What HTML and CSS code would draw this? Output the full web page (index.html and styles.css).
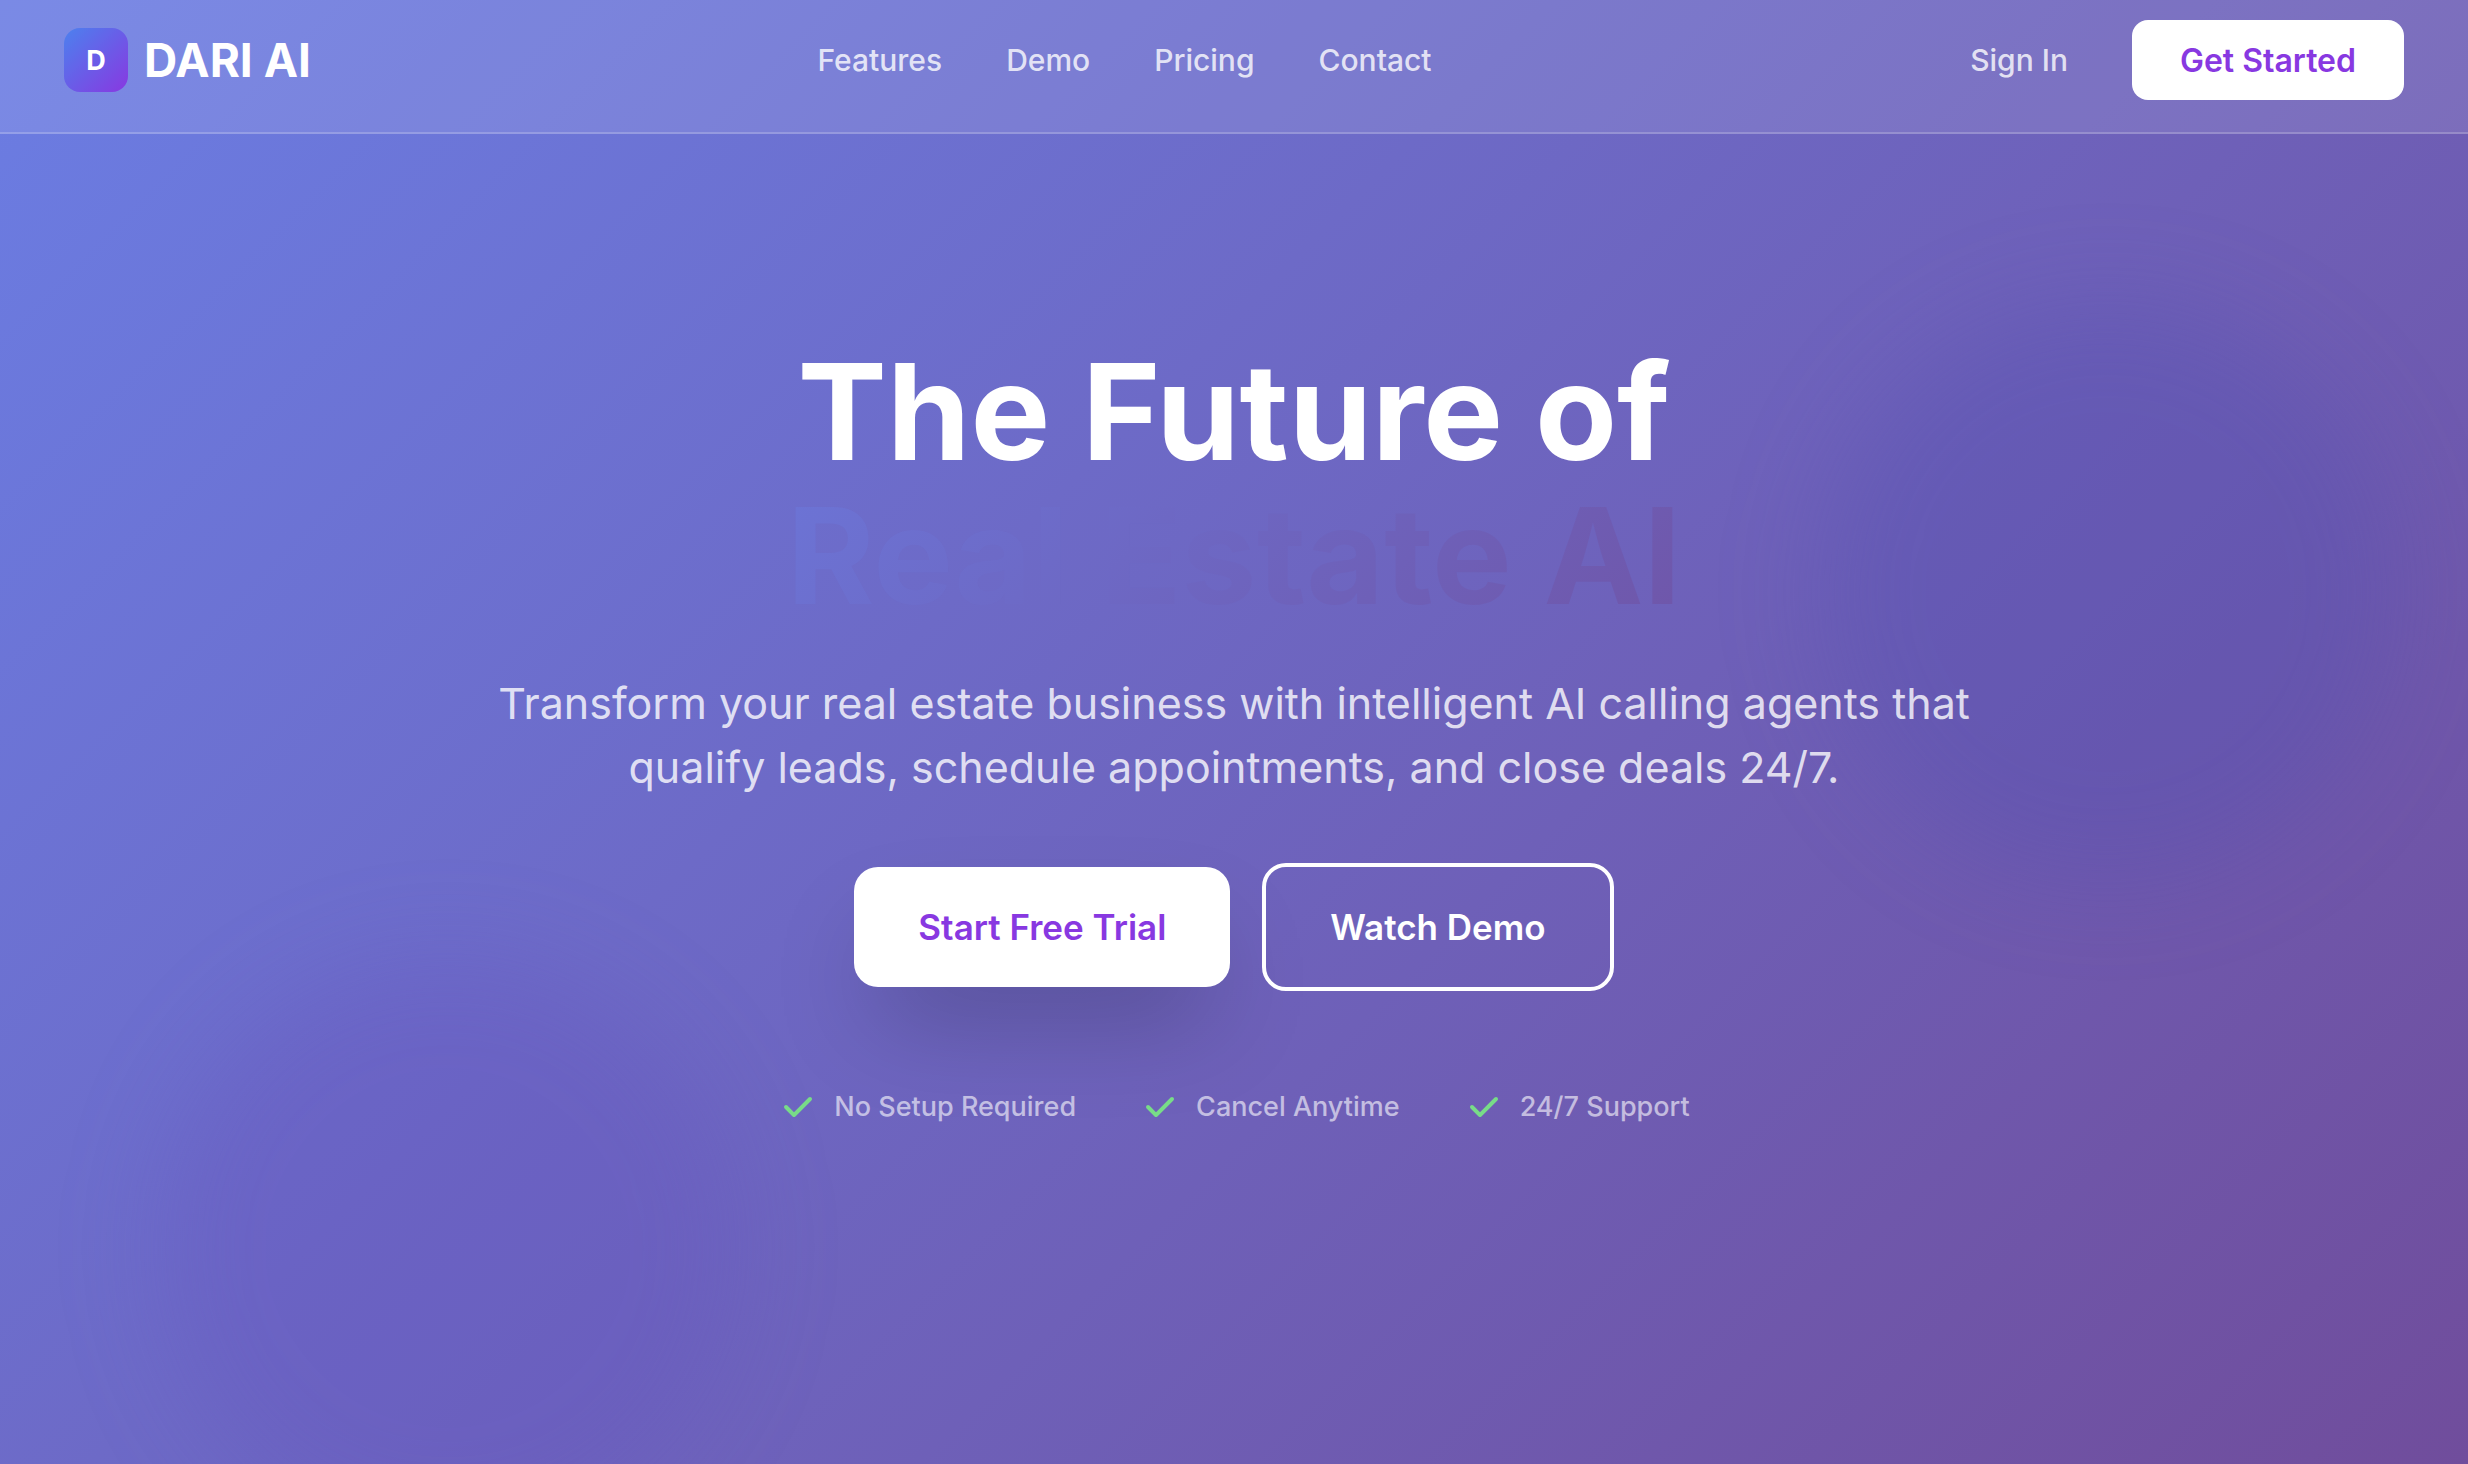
FILE: index.html
```html
<!DOCTYPE html>
<html lang="en">
<head>
<meta charset="utf-8">
<meta name="viewport" content="width=device-width, initial-scale=1">
<title>DARI AI</title>
<link rel="stylesheet" href="styles.css">
</head>
<body>
<div class="page">
  <div class="orb orb-right"></div>
  <div class="orb orb-left"></div>
  <header class="navbar">
    <a class="brand" href="#"><span class="brand-mark">D</span><span class="brand-name">DARI AI</span></a>
    <nav class="nav-links">
      <a href="#features">Features</a>
      <a href="#demo">Demo</a>
      <a href="#pricing">Pricing</a>
      <a href="#contact">Contact</a>
    </nav>
    <div class="nav-actions">
      <a class="sign-in" href="#signin">Sign In</a>
      <button class="btn-small" type="button">Get Started</button>
    </div>
  </header>
  <main class="hero">
    <h1 class="title">The Future of<span class="title-accent">Real Estate AI</span></h1>
    <p class="lead">Transform your real estate business with intelligent AI calling agents that qualify leads, schedule appointments, and close deals 24/7.</p>
    <div class="actions">
      <button class="btn btn-primary" type="button">Start Free Trial</button>
      <button class="btn btn-outline" type="button">Watch Demo</button>
    </div>
    <ul class="perks">
      <li><svg class="check" viewBox="0 0 20 20" aria-hidden="true"><path fill-rule="evenodd" d="M16.707 5.293a1 1 0 010 1.414l-8 8a1 1 0 01-1.414 0l-4-4a1 1 0 011.414-1.414L8 12.586l7.293-7.293a1 1 0 011.414 0z"/></svg>No Setup Required</li>
      <li><svg class="check" viewBox="0 0 20 20" aria-hidden="true"><path fill-rule="evenodd" d="M16.707 5.293a1 1 0 010 1.414l-8 8a1 1 0 01-1.414 0l-4-4a1 1 0 011.414-1.414L8 12.586l7.293-7.293a1 1 0 011.414 0z"/></svg>Cancel Anytime</li>
      <li><svg class="check" viewBox="0 0 20 20" aria-hidden="true"><path fill-rule="evenodd" d="M16.707 5.293a1 1 0 010 1.414l-8 8a1 1 0 01-1.414 0l-4-4a1 1 0 011.414-1.414L8 12.586l7.293-7.293a1 1 0 011.414 0z"/></svg>24/7 Support</li>
    </ul>
  </main>
</div>
</body>
</html>
```
FILE: styles.css
```css
* {
  box-sizing: border-box;
}

body {
  margin: 0;
  font-family: Inter, "Liberation Sans", sans-serif;
  color: #fff;
}

a {
  color: inherit;
  text-decoration: none;
}

button {
  border: 0;
  font-family: inherit;
  font-weight: 600;
  cursor: pointer;
}

.page {
  position: relative;
  display: flex;
  flex-direction: column;
  min-height: 100vh;
  overflow: hidden;
  background: linear-gradient(135deg, #6b7de3 0%, #704d9c 100%);
}

.orb {
  position: absolute;
  width: 576px;
  height: 576px;
  border-radius: 50%;
  filter: blur(48px);
}

.orb-right {
  top: 304px;
  right: 72px;
  background: rgba(79, 78, 178, 0.27);
}

.orb-left {
  bottom: -72px;
  left: 160px;
  background: rgba(99, 80, 190, 0.27);
}

.navbar {
  position: relative;
  display: flex;
  justify-content: space-between;
  align-items: center;
  padding: 20px 64px 32px;
  border-bottom: 2px solid rgba(255, 255, 255, 0.2);
  background: rgba(255, 255, 255, 0.1);
}

.brand {
  display: flex;
  align-items: center;
  gap: 16px;
}

.brand-mark {
  display: grid;
  place-items: center;
  width: 64px;
  height: 64px;
  border-radius: 16px;
  background: linear-gradient(135deg, #4c81ee, #8838e1);
  font-size: 27px;
  font-weight: 700;
}

.brand-name {
  font-size: 46px;
  font-weight: 700;
}

.nav-links {
  display: flex;
  gap: 64px;
}

.nav-links a,
.sign-in {
  color: rgba(255, 255, 255, 0.8);
  font-size: 30px;
  font-weight: 500;
}

.nav-actions {
  display: flex;
  align-items: center;
  gap: 64px;
  padding-left: 32px;
}

.btn-small {
  height: 80px;
  padding: 0 48px;
  border-radius: 16px;
  background: #fff;
  color: #8838e1;
  font-size: 32px;
}

.hero {
  position: relative;
  display: flex;
  flex: 1;
  flex-direction: column;
  align-items: center;
  justify-content: center;
  padding: 64px 64px 196px;
  text-align: center;
}

.title {
  width: 100%;
  max-width: 1536px;
  margin: 0 0 44px;
  font-size: 134px;
  font-weight: 700;
  line-height: 144px;
}

.title-accent {
  display: block;
  background: linear-gradient(135deg, #6b7de3 0%, #704d9c 100%);
  background-clip: text;
  color: transparent;
}

.lead {
  max-width: 1536px;
  margin: 0 0 64px;
  color: rgba(255, 255, 255, 0.8);
  font-size: 43px;
  line-height: 64px;
}

.actions {
  display: flex;
  align-items: center;
  gap: 32px;
  margin-bottom: 96px;
}

.btn {
  padding: 32px 64px;
  border-radius: 24px;
  font-size: 35px;
  line-height: 56px;
}

.btn-primary {
  background: #fff;
  color: #8838e1;
  box-shadow: 0 50px 100px -24px rgba(0, 0, 0, 0.25);
}

.btn-outline {
  border: 4px solid #fff;
  background: transparent;
  color: #fff;
}

.perks {
  display: flex;
  gap: 64px;
  margin: 0;
  padding: 0;
  list-style: none;
  color: rgba(255, 255, 255, 0.6);
  font-size: 27px;
  font-weight: 500;
  line-height: 40px;
}

.perks li {
  display: flex;
  align-items: center;
  gap: 16px;
}

.check {
  width: 40px;
  height: 40px;
  fill: #78dc88;
}
```
